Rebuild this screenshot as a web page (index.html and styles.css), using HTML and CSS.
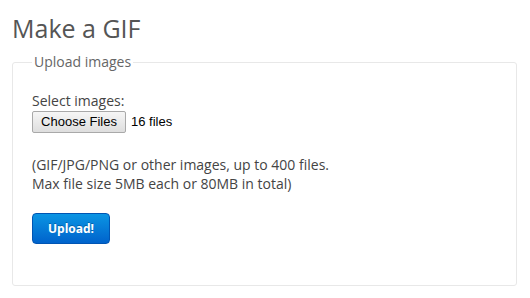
FILE: index.html
```html
<!DOCTYPE html>
<html>
<head>
<meta charset="utf-8">
<link rel="stylesheet" href="styles.css">
</head>
<body>
<div class="page">
  <h1 class="title">Make a GIF</h1>
  <fieldset class="box">
    <legend class="box-legend">Upload images</legend>
    <div class="field">
      <div class="field-label">Select images:</div>
      <div class="file-row">
        <span class="file-btn">Choose Files</span>
        <span class="file-count">16 files</span>
      </div>
    </div>
    <p class="note">(GIF/JPG/PNG or other images, up to 400 files.<br>Max file size 5MB each or 80MB in total)</p>
    <div class="upload-btn">Upload!</div>
  </fieldset>
</div>
</body>
</html>
```
FILE: styles.css
```css
html, body {
  margin: 0;
  padding: 0;
  background: #fff;
}
body {
  font-family: "Open Sans", sans-serif;
  font-size: 14px;
  line-height: 20px;
  color: #444;
}
.page {
  padding: 10px 13px 0 12px;
}
.title {
  margin: 0 0 6px 0;
  font-size: 25px;
  font-weight: 400;
  line-height: 36px;
  color: #555;
}
.box {
  margin: 0;
  border: 1px solid #e8e8e8;
  border-radius: 3px;
  padding: 10px 19px 41px 19px;
  min-height: 0;
}
.box-legend {
  padding: 0 2px;
  font-size: 14px;
  line-height: 20px;
  color: #666;
}
.field {
  margin-top: 9px;
}
.field-label {
  line-height: 20px;
}
.file-row {
  display: flex;
  align-items: center;
  gap: 5px;
  margin-top: 0;
}
.file-btn {
  display: inline-flex;
  align-items: center;
  justify-content: center;
  box-sizing: border-box;
  width: 94px;
  height: 22px;
  font-family: "Liberation Sans", Arial, sans-serif;
  font-size: 13px;
  color: #000;
  border: 1px solid #a9a9a9;
  border-radius: 2px;
  background: linear-gradient(#f6f6f6, #dedede);
}
.file-count {
  font-family: "Liberation Sans", Arial, sans-serif;
  font-size: 13px;
  color: #000;
}
.note {
  margin: 22px 0 20px 0;
  line-height: 19px;
}
.upload-btn {
  display: flex;
  align-items: center;
  justify-content: center;
  box-sizing: border-box;
  width: 78px;
  height: 31px;
  font-size: 12px;
  font-weight: 700;
  color: #fff;
  text-shadow: 0 -1px 0 rgba(0,0,0,0.25);
  border: 1px solid #0055b3;
  border-radius: 4px;
  background: linear-gradient(#0b95e3, #0063cc);
}
```
